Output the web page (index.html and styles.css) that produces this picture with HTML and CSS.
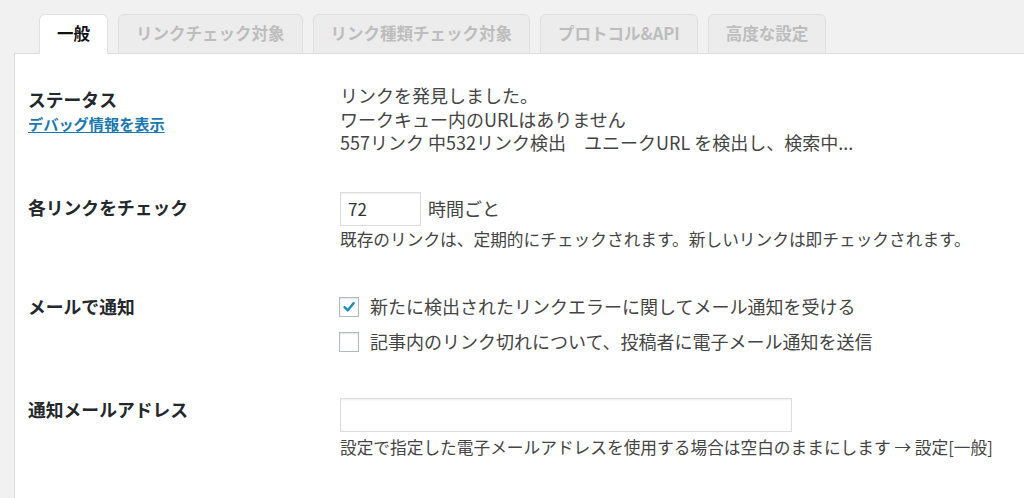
FILE: index.html
```html
<!DOCTYPE html>
<html lang="ja">
<head>
<meta charset="utf-8">
<title>設定</title>
<link rel="stylesheet" href="styles.css">
</head>
<body>
<div class="wrap">
  <nav class="tabs">
    <span class="tab active">一般</span>
    <span class="tab">リンクチェック対象</span>
    <span class="tab">リンク種類チェック対象</span>
    <span class="tab">プロトコル&amp;API</span>
    <span class="tab">高度な設定</span>
  </nav>
  <div class="panel">
    <div class="row row-status">
      <div class="label">
        <div>ステータス</div>
        <a class="link" href="#">デバッグ情報を表示</a>
      </div>
      <div class="field">
        <div class="line">リンクを発見しました。</div>
        <div class="line">ワークキュー内のURLはありません</div>
        <div class="line">557リンク 中532リンク検出　ユニークURL を検出し、検索中...</div>
      </div>
    </div>

    <div class="row row-check">
      <div class="label">各リンクをチェック</div>
      <div class="field">
        <div class="inline">
          <span class="input small">72</span>
          <span class="unit">時間ごと</span>
        </div>
        <div class="line desc">既存のリンクは、定期的にチェックされます。新しいリンクは即チェックされます。</div>
      </div>
    </div>

    <div class="row row-mail">
      <div class="label">メールで通知</div>
      <div class="field">
        <label class="cb-line">
          <span class="cb"><svg viewBox="0 0 20 20" width="20" height="20"><path d="M5 10.2 L8.6 13.8 L15.2 5.6" fill="none" stroke="#1e8cbe" stroke-width="2.6" stroke-linecap="round" stroke-linejoin="round"/></svg></span>
          <span>新たに検出されたリンクエラーに関してメール通知を受ける</span>
        </label>
        <label class="cb-line">
          <span class="cb"></span>
          <span>記事内のリンク切れについて、投稿者に電子メール通知を送信</span>
        </label>
      </div>
    </div>

    <div class="row row-addr">
      <div class="label">通知メールアドレス</div>
      <div class="field">
        <span class="input wide"></span>
        <div class="line desc">設定で指定した電子メールアドレスを使用する場合は空白のままにします → 設定[一般]</div>
      </div>
    </div>
  </div>
</div>
</body>
</html>
```

FILE: styles.css
```css
* { box-sizing: border-box; }

html, body {
  margin: 0;
  height: 100%;
}

body {
  background: #f1f1f1;
  font-family: "Noto Sans CJK JP", "Noto Sans", sans-serif;
  color: #444;
  overflow: hidden;
}

.wrap {
  padding: 14px 0 0 14px;
}

.tabs {
  display: flex;
  gap: 10px;
  padding-left: 25px;
  position: relative;
  z-index: 2;
  margin-bottom: -1px;
}

.tab {
  height: 40px;
  padding: 0 17px 1px;
  display: flex;
  align-items: center;
  font-size: 16.5px;
  font-weight: 700;
  color: #bdbdbd;
  background: #ececec;
  border: 1px solid #dedede;
  border-radius: 6px 6px 0 0;
  line-height: 1;
}

.tab.active {
  background: #fff;
  color: #111;
  border-color: #e0e0e0;
  border-bottom-color: #fff;
}

.panel {
  background: #fff;
  border-top: 1px solid #dcdcdc;
  border-left: 1px solid #dcdcdc;
  min-height: 460px;
  padding: 30px 0 0 13px;
}

.row {
  display: flex;
}

.label {
  width: 312px;
  flex: none;
  font-size: 17.8px;
  font-weight: 700;
  color: #23282d;
  line-height: 23.5px;
  padding-top: 4px;
}

.link {
  display: block;
  font-size: 15.2px;
  color: #1a78b2;
  text-decoration: underline;
  text-underline-offset: 2px;
  line-height: 20px;
  margin-top: 1px;
}

.field {
  font-size: 18px;
  line-height: 23.5px;
  color: #444;
}

.desc {
  font-size: 16.7px;
}

.row-check { margin-top: 37px; }
.row-mail { margin-top: 38px; }
.row-mail .label { padding-top: 6px; }
.row-addr { margin-top: 39px; }
.row-addr .label { padding-top: 0; }

.inline {
  display: flex;
  align-items: center;
  gap: 7px;
  margin-bottom: 2px;
}

.input {
  display: block;
  height: 34px;
  background: #fff;
  border: 1px solid #dddddd;
  box-shadow: inset 0 1px 2px rgba(0,0,0,0.07);
  font-size: 17px;
  line-height: 32px;
  color: #333;
  padding: 0 7px;
}

.input.small { width: 81px; }
.input.wide { width: 452px; margin-bottom: 4px; }

.unit { color: #444; }

.cb-line {
  display: flex;
  align-items: center;
  gap: 11px;
  height: 35px;
  margin-left: -1px;
}

.cb {
  width: 20px;
  height: 20px;
  flex: none;
  border: 1px solid #b4b9be;
  background: #fff;
  box-shadow: inset 0 1px 2px rgba(0,0,0,0.1);
  display: flex;
  align-items: center;
  justify-content: center;
}

.cb svg { display: block; width: 18px; height: 18px; }
```
